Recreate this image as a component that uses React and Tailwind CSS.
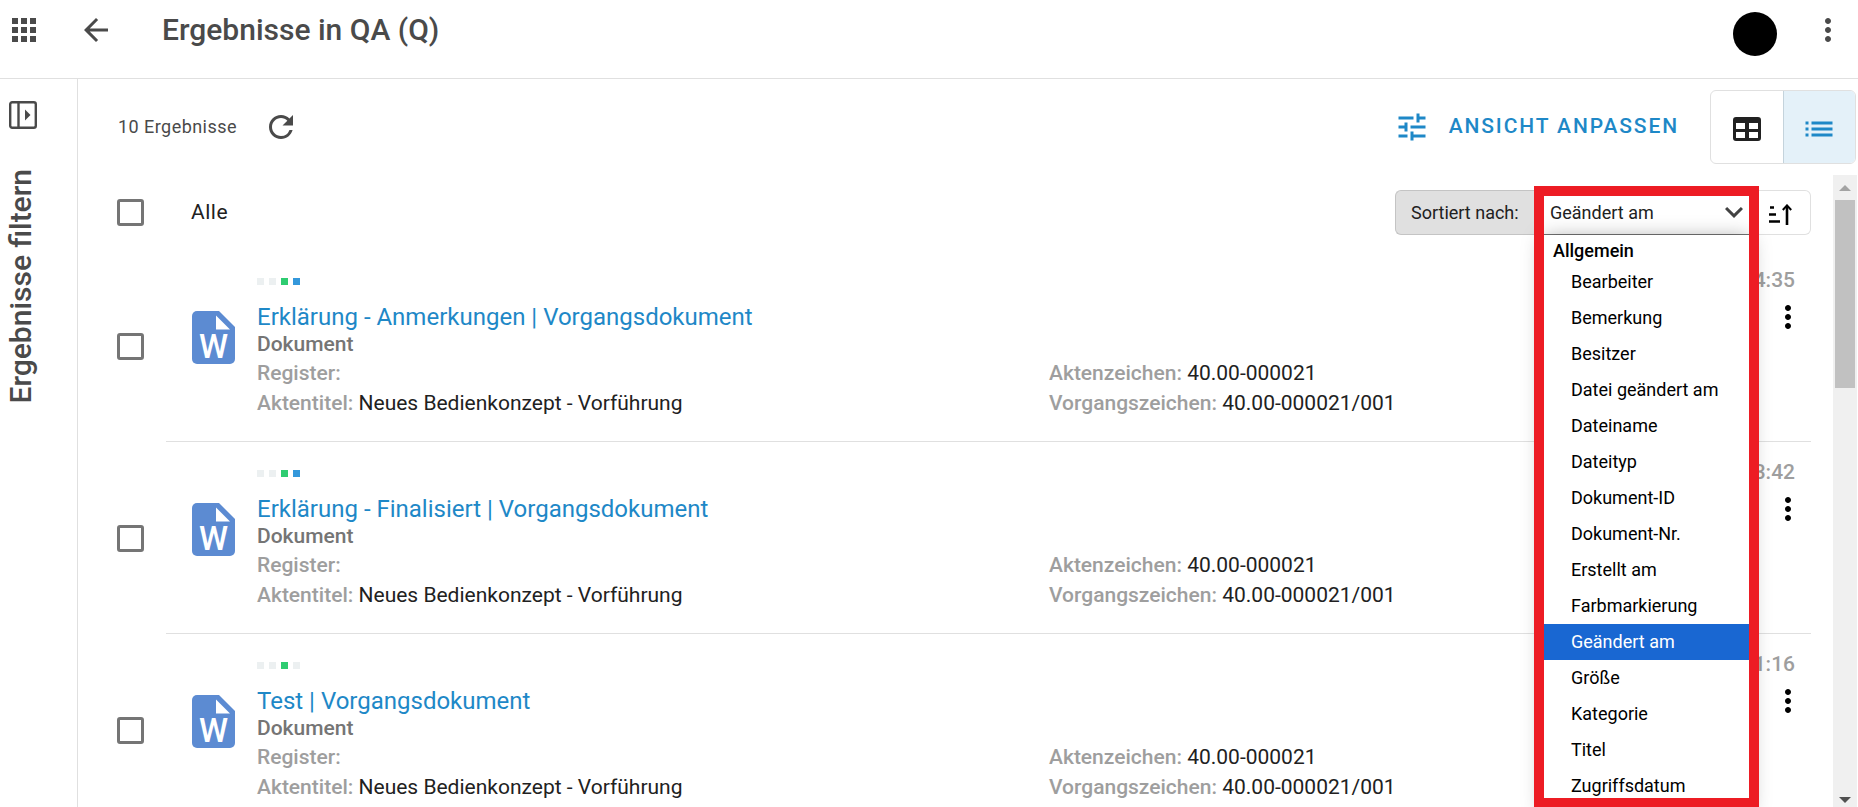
import { useState } from 'react'
import { MdApps, MdArrowBack, MdKeyboardArrowDown, MdList, MdMoreVert, MdRefresh, MdTune } from 'react-icons/md'

const sortOptions = [
  'Bearbeiter',
  'Bemerkung',
  'Besitzer',
  'Datei geändert am',
  'Dateiname',
  'Dateityp',
  'Dokument-ID',
  'Dokument-Nr.',
  'Erstellt am',
  'Farbmarkierung',
  'Geändert am',
  'Größe',
  'Kategorie',
  'Titel',
  'Zugriffsdatum',
]

const results = [
  {
    id: 1,
    title: 'Erklärung - Anmerkungen | Vorgangsdokument',
    time: '14:35',
    marks: ['bg-[#ecf0f1]', 'bg-[#ecf0f1]', 'bg-[#2ecc71]', 'bg-[#3498db]'],
  },
  {
    id: 2,
    title: 'Erklärung - Finalisiert | Vorgangsdokument',
    time: '13:42',
    marks: ['bg-[#ecf0f1]', 'bg-[#ecf0f1]', 'bg-[#2ecc71]', 'bg-[#3498db]'],
  },
  {
    id: 3,
    title: 'Test | Vorgangsdokument',
    time: '11:16',
    marks: ['bg-[#ecf0f1]', 'bg-[#ecf0f1]', 'bg-[#2ecc71]', 'bg-[#ecf0f1]'],
  },
]

const PanelIcon = () => (
  <svg width="28" height="28" viewBox="0 0 28 28" fill="none" stroke="currentColor" strokeWidth="2.4">
    <rect x="1.2" y="1.2" width="25.6" height="25.6" rx="2" />
    <path d="M9.5 1v26" />
    <path d="M16 8.5v11l5.5-5.5z" fill="currentColor" stroke="none" />
  </svg>
)

const TableIcon = () => (
  <svg width="28" height="24" viewBox="0 0 28 24" fill="currentColor">
    <path
      fillRule="evenodd"
      d="M3 0h22a3 3 0 0 1 3 3v18a3 3 0 0 1-3 3H3a3 3 0 0 1-3-3V3a3 3 0 0 1 3-3zM3 6v6h9V6zM16 6v6h9V6zM3 15v6h9v-6zM16 15v6h9v-6z"
    />
  </svg>
)

const SortAscIcon = () => (
  <svg width="24" height="22" viewBox="0 0 24 22" fill="none" stroke="currentColor" strokeWidth="2.6">
    <path d="M2 3.5h4M1 10.5h7M1 17.5h11" />
    <path d="M19 21V3" />
    <path d="M14.800 6 19 1.400 23.200 6" strokeWidth="2" />
  </svg>
)

const WordIcon = () => (
  <svg width="43" height="53" viewBox="0 0 43 53" className="overflow-visible">
    <path d="M5 0h22l16 16v32a5 5 0 0 1-5 5H5a5 5 0 0 1-5-5V5a5 5 0 0 1 5-5z" fill="#5c8bd2" />
    <path d="M24 4.500v14h14z" fill="#fff" />
    <text x="21.500" y="47" textAnchor="middle" fill="#fff" fontSize="33" fontWeight="500" fontFamily="Roboto, sans-serif">
      W
    </text>
  </svg>
)

const Checkbox = ({ label }) => (
  <input
    type="checkbox"
    aria-label={label}
    className="size-[27px] shrink-0 appearance-none rounded-[3px] border-3 border-[#757575] bg-white checked:bg-[#1e88c7]"
  />
)

const Field = ({ label, value }) => (
  <p className="text-[21px] leading-[30px]">
    <span className="font-medium text-[#9e9e9e]">{label}:</span> {value}
  </p>
)

const ResultRow = ({ result }) => (
  <li className="flex">
    <div className="flex w-[88px] shrink-0 items-center pl-[39px]">
      <Checkbox label={result.title} />
    </div>
    <article className="flex h-48 flex-1 gap-[22px] border-b border-[#e0e0e0] pr-[5px] pl-[26px]">
      <div className="shrink-0 pt-[61px]">
        <WordIcon />
      </div>
      <div className="flex-1 pt-5">
        <div className="flex h-[23px] items-start justify-between">
          <div className="flex gap-[5px] pt-2">
            {result.marks.map((color, i) => (
              <span key={i} className={`size-[7px] ${color}`} />
            ))}
          </div>
          <time className="pr-[11px] text-[21px] leading-5 font-medium text-[#9e9e9e]">{result.time}</time>
        </div>
        <div className="mt-[10px] flex h-7 items-center justify-between">
          <a href="#" className="text-2xl leading-7 text-[#1e88c7]">
            {result.title}
          </a>
          <button type="button" aria-label="Aktionen" className="text-black">
            <MdMoreVert size={36} />
          </button>
        </div>
        <p className="text-[21px] leading-[27px] font-medium text-[#757575]">Dokument</p>
        <div className="grid grid-cols-2 gap-x-[35px]">
          <Field label="Register" />
          <Field label="Aktenzeichen" value="40.00-000021" />
          <Field label="Aktentitel" value="Neues Bedienkonzept - Vorführung" />
          <Field label="Vorgangszeichen" value="40.00-000021/001" />
        </div>
      </div>
    </article>
  </li>
)

const SortBar = ({ sort, setSort }) => (
  <div className="flex h-[45px]">
    <label
      htmlFor="sort"
      className="flex w-[149px] items-center rounded-l-md border border-r-0 border-[#c4c4c4] bg-[#e0e0e0] pl-[15px] text-lg"
    >
      Sortiert nach:
    </label>
    <div className="relative w-[205px]">
      <select
        id="sort"
        value={sort}
        onChange={e => setSort(e.target.value)}
        className="h-full w-full appearance-none border-b border-[#757575] bg-white pt-[2px] pl-[6px] text-lg"
      >
        {sortOptions.map(option => (
          <option key={option}>{option}</option>
        ))}
      </select>
      <MdKeyboardArrowDown size={36} className="pointer-events-none absolute top-1 -right-[3px] text-[#424242]" />
      <div className="absolute top-full left-0 z-10 h-[572px] w-full overflow-hidden bg-white shadow-[0_4px_20px_rgba(0,0,0,0.4)]">
        <p className="pt-[2px] pl-[9px] text-lg leading-[27px] font-medium text-black">Allgemein</p>
        <ul role="listbox" aria-label="Allgemein">
          {sortOptions.map(option => (
            <li
              key={option}
              role="option"
              aria-selected={option === sort}
              onClick={() => setSort(option)}
              className={
                option === sort
                  ? 'bg-[#1967d2] pl-[27px] text-lg leading-9 text-white'
                  : 'pl-[27px] text-lg leading-9 text-black'
              }
            >
              {option}
            </li>
          ))}
        </ul>
      </div>
      <div className="pointer-events-none absolute -inset-x-[10px] -top-1 z-20 h-[622px] border-10 border-[#ed1c24]" />
    </div>
    <button
      type="button"
      aria-label="Sortierreihenfolge"
      className="flex w-[62px] items-center justify-center rounded-r-md border border-l-0 border-[#e0e0e0] pt-1 text-black"
    >
      <SortAscIcon />
    </button>
  </div>
)

const Scrollbar = () => (
  <div aria-hidden="true" className="mr-px flex w-6 shrink-0 flex-col items-center bg-[#f0f0f0]">
    <svg width="12" height="25" viewBox="0 0 12 25" fill="#a3a3a3">
      <path d="M0 16h12L6 10z" />
    </svg>
    <div className="h-[188px] w-5 bg-[#c1c1c1]" />
    <svg width="12" height="14" viewBox="0 0 12 14" fill="#505050" className="mt-auto">
      <path d="M0 4h12L6 10z" />
    </svg>
  </div>
)

const App = () => {
  const [sort, setSort] = useState('Geändert am')

  return (
    <div className="flex h-screen flex-col overflow-hidden bg-white font-['Roboto',sans-serif] text-[#212121]">
      <header className="flex h-[79px] shrink-0 items-start border-b border-[#e0e0e0] pt-3 pr-3 pl-[6px] text-[#4a4a4a]">
        <button type="button" aria-label="Apps">
          <MdApps size={36} />
        </button>
        <button type="button" aria-label="Zurück" className="ml-9">
          <MdArrowBack size={36} />
        </button>
        <h1 className="ml-12 text-3xl leading-9 font-medium">Ergebnisse in QA (Q)</h1>
        <button type="button" aria-label="Profil" className="ml-auto size-11 rounded-full bg-black" />
        <button type="button" aria-label="Menü" className="ml-[33px]">
          <MdMoreVert size={36} />
        </button>
      </header>

      <div className="flex min-h-0 flex-1">
        <aside className="w-[78px] shrink-0 border-r border-[#e0e0e0] pt-[22px] text-[#4a4a4a]">
          <button type="button" className="ml-[5px] flex flex-col items-end gap-10">
            <PanelIcon />
            <span className="rotate-180 text-3xl leading-8 font-medium [writing-mode:vertical-rl]">
              Ergebnisse filtern
            </span>
          </button>
        </aside>

        <main className="flex min-w-0 flex-1 flex-col">
          <div className="flex h-24 shrink-0 items-center pr-[2px] pl-10">
            <p className="text-lg tracking-wide text-[#4a4a4a]">10 Ergebnisse</p>
            <button type="button" aria-label="Aktualisieren" className="ml-[26px] text-[#4a4a4a]">
              <MdRefresh size={36} />
            </button>
            <button
              type="button"
              className="ml-auto flex items-center gap-[19px] text-[21px] font-medium tracking-[0.09em] text-[#1e88c7]"
            >
              <MdTune size={36} />
              ANSICHT ANPASSEN
            </button>
            <div className="ml-[31px] flex h-[74px] w-[146px] overflow-hidden rounded-md border border-[#e0e0e0]">
              <button
                type="button"
                aria-label="Tabelle"
                className="flex flex-1 items-center justify-center border-r border-[#c4d3dc] pt-1"
              >
                <TableIcon />
              </button>
              <button
                type="button"
                aria-label="Liste"
                className="flex flex-1 items-center justify-center bg-[#e4f1f9] pt-1 text-[#1e88c7]"
              >
                <MdList size={36} />
              </button>
            </div>
          </div>

          <div className="flex min-h-0 flex-1">
            <div className="flex-1 pr-[22px]">
              <div className="flex h-[75px] items-center justify-between pl-[39px]">
                <label className="flex items-center gap-[47px] text-[21px] tracking-wide">
                  <Checkbox label="Alle" />
                  Alle
                </label>
                <SortBar sort={sort} setSort={setSort} />
              </div>
              <ul>
                {results.map(result => (
                  <ResultRow key={result.id} result={result} />
                ))}
              </ul>
            </div>
            <Scrollbar />
          </div>
        </main>
      </div>
    </div>
  )
}

export default App
